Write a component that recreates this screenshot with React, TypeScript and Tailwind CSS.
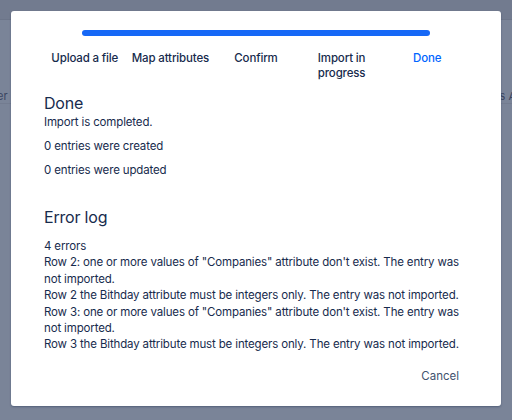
import React from 'react';

const steps = ['Upload a file', 'Map attributes', 'Confirm', 'Import in progress', 'Done'];

const errors = [
  'Row 2: one or more values of "Companies" attribute don\'t exist. The entry was not imported.',
  'Row 2 the Bithday attribute must be integers only. The entry was not imported.',
  'Row 3: one or more values of "Companies" attribute don\'t exist. The entry was not imported.',
  'Row 3 the Bithday attribute must be integers only. The entry was not imported.',
];

const App = () => {
  return (
    <div className="relative w-[512px] h-[420px] overflow-hidden bg-[#7a8498] text-[#172b4d]" style={{ fontFamily: 'Inter, "Noto Sans", sans-serif' }}>
      {/* page behind the overlay */}
      <div className="h-[20px] bg-[#727b8f] border-b border-[#6c7589]" />
      <div className="flex justify-between items-center mt-[70px] h-[14px] text-[11px] text-[#3a4560] border-b border-[#737c90]">
        <span className="-ml-[3px]">er</span>
        <span className="-mr-[4px]">s A</span>
      </div>

      <div className="absolute left-[11px] top-[11px] w-[490px] h-[395px] bg-white rounded-[3px] shadow-[0_1px_2px_rgba(9,30,66,0.35)] px-[33px] pt-[19px]">
        <div className="mx-[38px] h-[6px] rounded-full bg-[#1668f6]" />
        <div className="grid grid-cols-5 mt-[15px] -mx-[2px] text-[11.5px] leading-[15px] font-medium tracking-[-0.15px] text-center">
          {steps.map((s, i) => (
            <div key={s} className={`whitespace-nowrap ${i === steps.length - 1 ? 'text-[#0065ff]' : 'text-[#172b4d]'}`}>
              {s === 'Import in progress' ? (
                <>Import in<br />progress</>
              ) : s}
            </div>
          ))}
        </div>

        <h2 className="mt-[12px] text-[16px] leading-[20px] font-normal tracking-[-0.2px]">Done</h2>
        <div className="mt-[1px] text-[11.5px] leading-[16px] tracking-[-0.15px] flex flex-col gap-[8px]">
          <p>Import is completed.</p>
          <p>0 entries were created</p>
          <p>0 entries were updated</p>
        </div>

        <h2 className="mt-[29px] text-[16px] leading-[20px] font-normal tracking-[-0.2px]">Error log</h2>
        <div className="mt-[11px] text-[11.5px] leading-[16.4px] tracking-[-0.15px] pr-[6px]">
          <p>4 errors</p>
          {errors.map((e, i) => (
            <p key={i}>{e}</p>
          ))}
        </div>

        <div className="flex justify-end mt-[15px] pr-[9px]">
          <button className="text-[11.5px] leading-[16px] text-[#42526e]">Cancel</button>
        </div>
      </div>
    </div>
  );
};

export default App;
